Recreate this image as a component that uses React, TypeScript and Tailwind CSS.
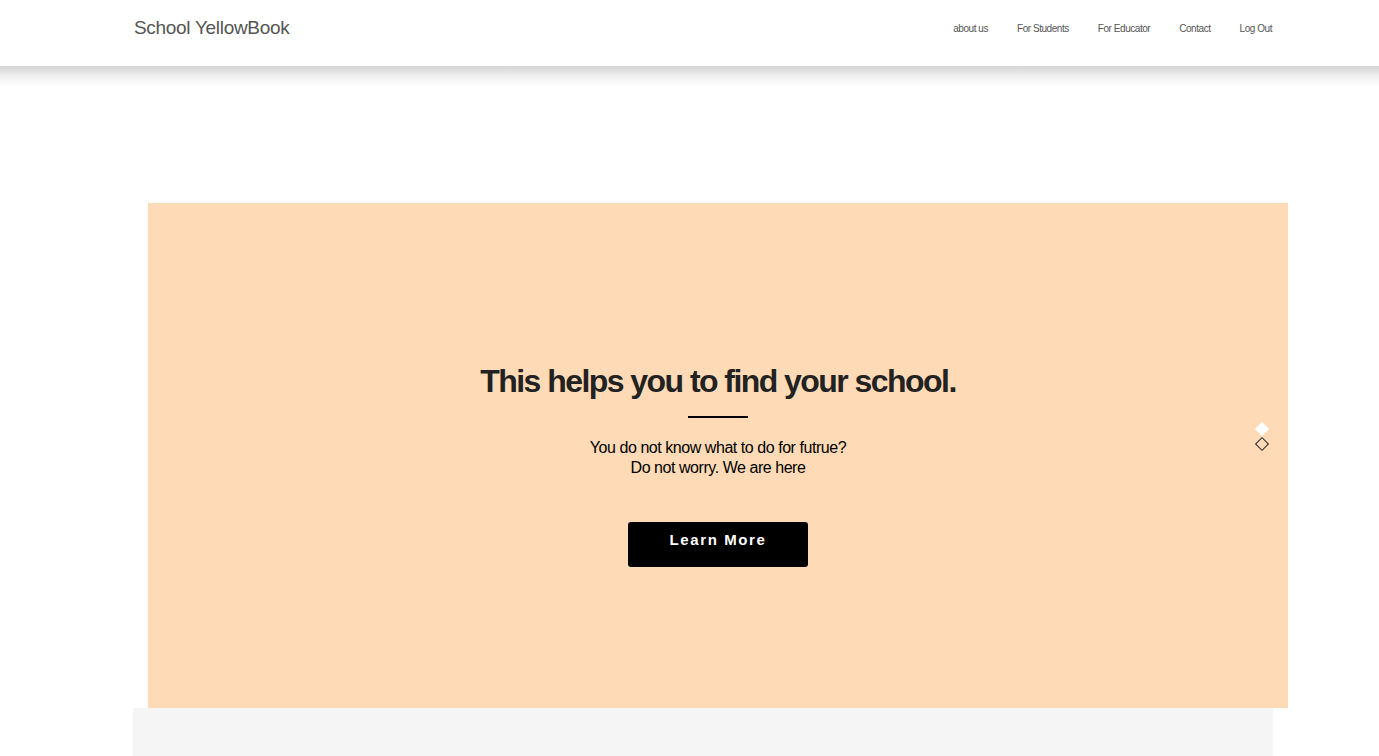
export default function App() {
  const navItems = ['about us', 'For Students', 'For Educator', 'Contact', 'Log Out'];

  return (
    <div className="min-h-screen bg-white font-['Liberation_Sans',Arial,sans-serif] overflow-hidden">
      {/* header */}
      <header className="h-[66px] bg-white">
        <div className="flex h-full items-center justify-between pl-[134px] pr-[107px]">
          <div className="text-[19px] text-[#555] tracking-[-0.3px] pb-[10px]">School YellowBook</div>
          <nav className="flex items-center gap-[29px] pb-[10px]">
            {navItems.map((item) => (
              <a key={item} className="text-[10px] text-[#555] tracking-[-0.45px] cursor-pointer">
                {item}
              </a>
            ))}
          </nav>
        </div>
      </header>
      <div className="h-[20px] bg-gradient-to-b from-[#d4d4d4] via-[#f0f0f0] to-white" />

      <div className="h-[117px]" />

      {/* hero */}
      <section className="relative ml-[148px] w-[1140px] h-[505px] bg-[#fedbb6] flex flex-col items-center pt-[158px]">
        <h1 className="text-[32px] font-bold text-[#222] leading-[40px] tracking-[-1.55px]">
          This helps you to find your school.
        </h1>
        <div className="mt-[15px] h-[2px] w-[60px] bg-black" />
        <p className="mt-[20px] text-[16px] leading-[20px] text-black text-center tracking-[-0.45px]">
          You do not know what to do for futrue?
          <br />
          Do not worry. We are here
        </p>
        <button className="mt-[44px] w-[180px] h-[45px] rounded-[3px] bg-black text-white text-[15px] font-bold tracking-[1.6px] pb-[9px]">
          Learn More
        </button>

        {/* slide dots */}
        <div className="absolute right-[21px] top-[221px] flex flex-col items-center gap-[5px]">
          <div className="w-[10px] h-[10px] rotate-45 bg-white" />
          <div className="w-[10px] h-[10px] rotate-45 border border-[#222]" />
        </div>
      </section>

      {/* next section */}
      <section className="ml-[133px] w-[1140px] h-[200px] bg-[#f5f5f5]" />
    </div>
  );
}
